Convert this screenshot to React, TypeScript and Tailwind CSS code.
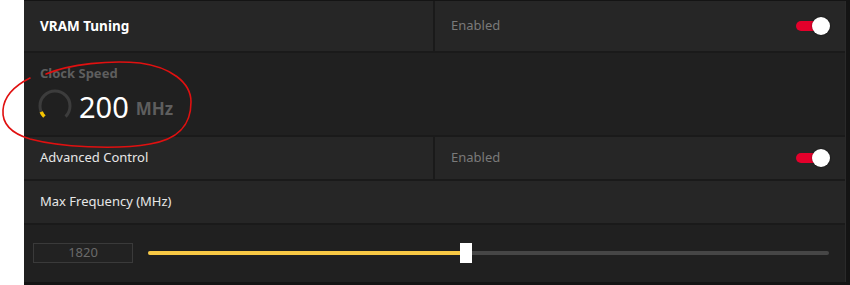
import React from 'react'

const font = { fontFamily: '"Noto Sans", "Open Sans", Arial, sans-serif' }

function Toggle() {
  return (
    <div className="relative w-[34px] h-[18px] flex items-center">
      <div className="h-[10px] w-[26px] rounded-full bg-[#e4002b]" />
      <div className="absolute right-0 top-0 h-[18px] w-[18px] rounded-full bg-white shadow-[0_0_2px_rgba(0,0,0,0.6)]" />
    </div>
  )
}

function ToggleRow({ label, bold }: { label: string; bold?: boolean }) {
  return (
    <div className="flex-1 flex bg-[#262626]">
      <div className={`w-[411px] border-r-2 border-[#1a1a1a] flex items-center pl-4 ${bold ? 'text-[13.5px] font-bold text-white' : 'text-[13px] text-[#e6e6e6]'}`}>
        {label}
      </div>
      <div className="flex-1 flex items-center justify-between pl-4 pr-[15px] text-[13px] text-[#7a7a7a]">
        <span>Enabled</span>
        <Toggle />
      </div>
    </div>
  )
}

function Gauge() {
  return (
    <svg width="34" height="34" viewBox="0 0 34 34">
      <path d="M6.4 27.6 A15 15 0 1 1 27.6 27.6" fill="none" stroke="#3c3c3c" strokeWidth="3" />
      <path d="M6.4 27.6 A15 15 0 0 1 3.2 22.8" fill="none" stroke="#f5c400" strokeWidth="3.5" />
    </svg>
  )
}

export default function App() {
  return (
    <div className="w-[850px] h-[285px] bg-white relative" style={font}>
      <div className="ml-6 h-full bg-[#141414] pr-[4px] pt-[1px] pb-[3px]">
        <div className="h-full bg-[#1a1a1a] border-r border-[#2a2a2a] flex flex-col gap-[2px]">
          <div className="h-[50px] flex">
            <ToggleRow label="VRAM Tuning" bold />
          </div>
          <div className="h-[82px] bg-[#202020] pl-4 pt-[11px]">
            <div className="text-[13px] font-bold text-[#5e5e5e] leading-[18px]">Clock Speed</div>
            <div className="flex items-center mt-[7px] -ml-[2px]">
              <Gauge />
              <span className="ml-[7px] text-[29px] text-white leading-none">200</span>
              <span className="ml-[7px] mt-[5px] text-[17px] font-bold text-[#5e5e5e] leading-none">MHz</span>
            </div>
          </div>
          <div className="h-[42px] flex">
            <ToggleRow label="Advanced Control" />
          </div>
          <div className="h-[42px] bg-[#262626] flex items-center pl-4 text-[13px] text-[#e6e6e6]">
            Max Frequency (MHz)
          </div>
          <div className="flex-1 bg-[#202020] flex items-center pl-[9px] pr-[16px] pb-[2px]">
            <div className="w-[100px] h-[20px] border border-[#3a3a3a] bg-[#222222] flex items-center justify-center text-[13px] text-[#6a6a6a]">
              1820
            </div>
            <div className="relative flex-1 ml-[15px] h-[20px] flex items-center">
              <div className="h-[4px] w-full rounded-full bg-[#464646]" />
              <div className="absolute left-0 h-[4px] w-[314px] rounded-l-full bg-[#f7c844]" />
              <div className="absolute left-[312px] top-0 h-[20px] w-[12px] bg-white" />
            </div>
          </div>
        </div>
      </div>
      <svg className="absolute left-0 top-0 pointer-events-none" width="200" height="150" viewBox="0 0 200 150">
        <path
          d="M46 74 C70 64 110 60 140 63 C170 67 191 82 191 102 C191 124 180 139 150 144 C115 150 60 147 30 139 C10 133 2 123 3 110 C4 96 14 86 30 78"
          fill="none"
          stroke="#e01010"
          strokeWidth="1.6"
          strokeLinecap="round"
        />
      </svg>
    </div>
  )
}
